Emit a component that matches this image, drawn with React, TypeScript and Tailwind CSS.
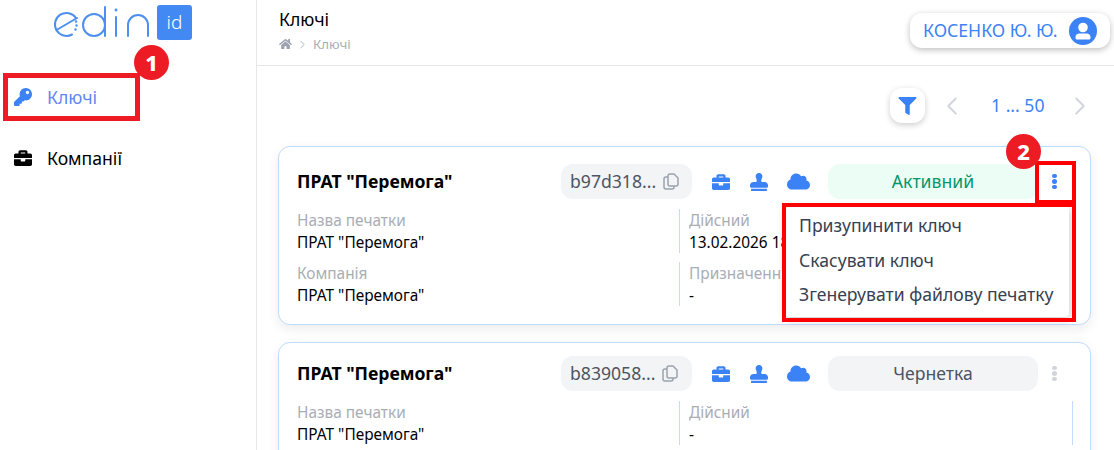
import { FaKey, FaBriefcase, FaStamp, FaCloud, FaHome, FaFilter } from "react-icons/fa";
import { ChevronLeft, ChevronRight } from "lucide-react";

function Logo() {
  return (
    <div className="flex items-start gap-[5px]">
      <svg width="100" height="36" viewBox="0 0 100 36" fill="none" stroke="#4d8ff0" strokeWidth="2" strokeLinecap="round">
        <path d="M24 13 A11.500 11.500 0 1 0 20 29.500" />
        <path d="M4.500 25 L25 13" />
        <circle cx="24" cy="16.500" r="1.200" fill="#4d8ff0" stroke="none" />
        <circle cx="24.500" cy="20.500" r="1.200" fill="#4d8ff0" stroke="none" />
        <circle cx="23.500" cy="24.500" r="1.200" fill="#4d8ff0" stroke="none" />
        <circle cx="42" cy="20" r="11" />
        <path d="M53 2 V31" />
        <path d="M64 12 V31" />
        <circle cx="64" cy="5" r="1.400" fill="#4d8ff0" stroke="none" />
        <path d="M76 31 V20 A10 10 0 0 1 96 20 V31" />
      </svg>
      <div className="w-[35px] h-[35px] rounded-[3px] bg-[#4289f4] flex items-center justify-center text-white text-[19px] font-light leading-none">id</div>
    </div>
  );
}

function UserIcon() {
  return (
    <svg width="28" height="28" viewBox="0 0 28 28">
      <circle cx="14" cy="14" r="14" fill="#3b82f6" />
      <circle cx="14" cy="10.500" r="4.800" fill="white" />
      <path d="M6.500 20 C6.500 17.500 9 16.500 10.500 16.500 H17.500 C19 16.500 21.500 17.500 21.500 20 V21 A1.500 1.500 0 0 1 20 22.500 H8 A1.500 1.500 0 0 1 6.500 21 Z" fill="white" />
    </svg>
  );
}

function CopyIcon() {
  return (
    <svg width="16" height="17" viewBox="0 0 16 17" fill="none" stroke="#9ca3af" strokeWidth="1.500" strokeLinejoin="round" className="shrink-0">
      <path d="M7 1 H11 L15 5 V11 A2 2 0 0 1 13 13 H7 A2 2 0 0 1 5 11 V3 A2 2 0 0 1 7 1 Z" />
      <path d="M5 4 H3 A2 2 0 0 0 1 6 V14 A2 2 0 0 0 3 16 H9 A2 2 0 0 0 11 14 V13" />
    </svg>
  );
}

function Field({ label, value }: { label: string; value: string }) {
  return (
    <div className="h-[44px] pt-[1px] flex flex-col whitespace-nowrap overflow-hidden">
      <div className="text-[15.4px] leading-[22px] text-[#a9adb5]">{label}</div>
      <div className="text-[15.4px] leading-[22px] text-black">{value}</div>
    </div>
  );
}

function Card({ id, status, statusClass, dots, top, children }: { id: string; status: string; statusClass: string; dots: string; top: string; children: React.ReactNode }) {
  return (
    <div className={`relative w-[813px] rounded-xl border border-[#bfdbfe] bg-white shadow-[0_4px_12px_rgba(0,0,0,0.08)] pl-[18px] pr-[17px] pb-[18px] shrink-0 ${top}`}>
      <div className="flex items-center h-[35px]">
        <div className="w-[264px] text-[17.6px] font-bold text-black whitespace-nowrap">ПРАТ "Перемога"</div>
        <div className="w-[131px] h-[35px] rounded-xl bg-[#f3f4f6] flex items-center pl-[9px] gap-[7px] text-[17.6px] text-[#4b5563] whitespace-nowrap">
          <span>{id}</span>
          <CopyIcon />
        </div>
        <div className="flex items-center ml-[19px] gap-[19px] text-[#3b82f6]">
          <FaBriefcase className="w-[20px] h-[18px]" />
          <FaStamp className="w-[18px] h-[18px]" />
          <FaCloud className="w-[23px] h-[19px]" />
        </div>
        <div className={`ml-[18px] w-[210px] h-[35px] rounded-xl flex items-center justify-center text-[17.6px] ${statusClass}`}>{status}</div>
        <div className="flex-1 flex justify-center pr-[2px]">
          <div className="flex flex-col gap-[1px]">
            <span className={`w-[4.400px] h-[4.400px] rounded-full ${dots}`} />
            <span className={`w-[4.400px] h-[4.400px] rounded-full ${dots}`} />
            <span className={`w-[4.400px] h-[4.400px] rounded-full ${dots}`} />
          </div>
        </div>
      </div>
      {children}
    </div>
  );
}

export default function App() {
  return (
    <div className="relative w-[1114px] h-[450px] overflow-hidden bg-white flex font-['Noto_Sans',sans-serif]">
      <aside className="w-[257px] shrink-0 border-r border-[#e5e7eb] h-full">
        <div className="flex justify-start pl-[52px] pt-[5px] h-[68px]">
          <Logo />
        </div>
        <nav className="pl-[14px]">
          <div className="flex items-center gap-[15px] h-[56px] pt-[2px]">
            <FaKey className="w-[18px] h-[18px] text-[#3b82f6]" />
            <span className="text-[17.6px] text-[#5f87f5]">Ключі</span>
          </div>
          <div className="flex items-center gap-[15px] h-[56px] text-black mt-[6px]">
            <FaBriefcase className="w-[18px] h-[18px]" />
            <span className="text-[17.6px]">Компанії</span>
          </div>
        </nav>
      </aside>

      <main className="flex-1 min-w-0 flex flex-col">
        <header className="h-[66px] shrink-0 border-b border-[#e5e7eb] flex items-start justify-between pl-[22px] pr-[4px]">
          <div className="pt-[8px]">
            <div className="text-[17.6px] leading-[22px] text-black">Ключі</div>
            <div className="flex items-center gap-[4px] mt-[5px] text-[13.2px] leading-[18px] text-[#a9adb5]">
              <FaHome className="w-[13px] h-[12px] text-[#9ca3af]" />
              <ChevronRight className="w-[13px] h-[13px] text-[#9ca3af]" strokeWidth={1.5} />
              <span>Ключі</span>
            </div>
          </div>
          <div className="mt-[13px] h-[35px] w-[200px] rounded-xl bg-white shadow-[0_2px_6px_rgba(0,0,0,0.25)] flex items-center justify-between pl-[13px] pr-[13px]">
            <span className="text-[17.6px] text-[#3b82f6] whitespace-nowrap">КОСЕНКО Ю. Ю.</span>
            <UserIcon />
          </div>
        </header>

        <div className="h-[80px] shrink-0 flex items-start pl-[633px] pt-[22px]">
          <div className="w-[35px] h-[35px] rounded-xl bg-white shadow-[0_2px_6px_rgba(0,0,0,0.2)] flex items-center justify-center">
            <FaFilter className="w-[19px] h-[18px] text-[#3b82f6]" />
          </div>
          <div className="flex items-center h-[35px]">
            <ChevronLeft className="ml-[12px] w-[30px] h-[30px] text-[#d1d5db]" strokeWidth={1.5} />
            <span className="ml-[24px] text-[17.6px] text-[#3b82f6] whitespace-nowrap">1 ... 50</span>
            <ChevronRight className="ml-[20px] w-[30px] h-[30px] text-[#d1d5db]" strokeWidth={1.5} />
          </div>
        </div>

        <div className="pl-[21px] flex flex-col gap-[17px]">
          <Card id="b97d318..." status="Активний" statusClass="bg-[#ecfdf5] text-[#059669]" dots="bg-[#3b82f6]" top="pt-[17px]">
            <div className="grid grid-cols-[383px_393px] gap-y-[9px] mt-[10px]">
              <div className="border-r border-[#bfdbfe]"><Field label="Назва печатки" value={'ПРАТ "Перемога"'} /></div>
              <div className="pl-[9px] border-r border-[#bfdbfe]"><Field label="Дійсний" value="13.02.2026 18:00:00" /></div>
              <div className="border-r border-[#bfdbfe]"><Field label="Компанія" value={'ПРАТ "Перемога"'} /></div>
              <div className="pl-[9px] border-r border-[#bfdbfe]"><Field label="Призначення" value="-" /></div>
            </div>
            <div className="absolute left-[507px] top-[59px] w-[283px] h-[111px] bg-white rounded shadow-[0_2px_8px_rgba(0,0,0,0.25)] pt-[2px] z-10 text-[17.6px] text-[#374151]">
              <div className="h-[34.500px] leading-[34.500px] pl-[13px]">Призупинити ключ</div>
              <div className="h-[34.500px] leading-[34.500px] pl-[13px]">Скасувати ключ</div>
              <div className="h-[34.500px] leading-[34.500px] pl-[13px] whitespace-nowrap">Згенерувати файлову печатку</div>
            </div>
          </Card>
          <Card id="b839058..." status="Чернетка" statusClass="bg-[#f3f4f6] text-[#4b5563]" dots="bg-[#d1d5db]" top="pt-[13px]">
            <div className="grid grid-cols-[383px_393px] gap-y-[9px] mt-[10px]">
              <div className="border-r border-[#bfdbfe]"><Field label="Назва печатки" value={'ПРАТ "Перемога"'} /></div>
              <div className="pl-[9px] border-r border-[#bfdbfe]"><Field label="Дійсний" value="-" /></div>
            </div>
          </Card>
        </div>
      </main>

      {/* annotations */}
      <div className="absolute left-[3px] top-[73px] w-[137px] h-[48px] border-[5px] border-[#ed1c24]" />
      <div className="absolute left-[134px] top-[45px] w-[35px] h-[35px] rounded-full bg-[#ed1c24] text-white flex items-center justify-center text-[22px] font-extrabold">1</div>
      <div className="absolute left-[1035px] top-[161px] w-[41px] h-[43px] border-[4px] border-[#ff0000] z-20" />
      <div className="absolute left-[782px] top-[203px] w-[294px] h-[119px] border-[4px] border-[#ff0000] z-20" />
      <div className="absolute left-[1006px] top-[134px] w-[35px] h-[35px] rounded-full bg-[#ed1c24] text-white flex items-center justify-center text-[22px] font-extrabold z-30">2</div>
    </div>
  );
}
